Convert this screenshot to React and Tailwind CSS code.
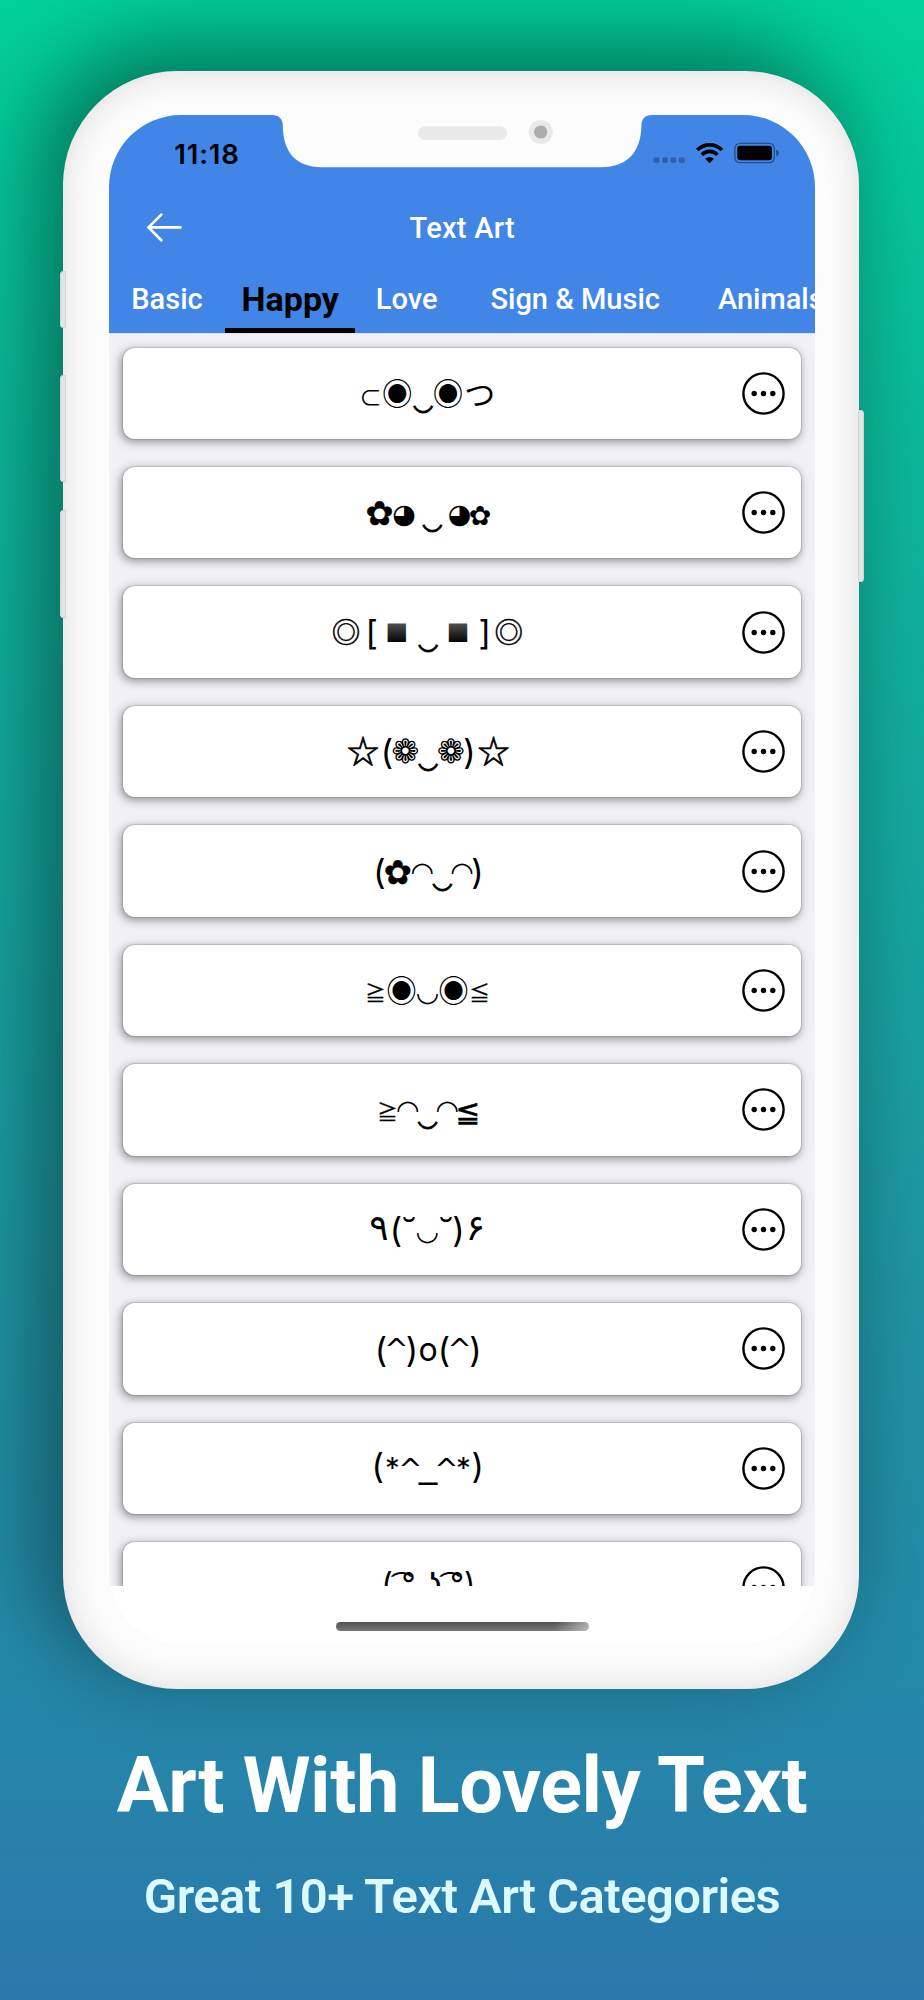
import React from 'react';

// every glyph style has its own font, size and the distance from its middle to the baseline
const glyphs = {
    text: { className: 'font-[Inter]', fontSize: 34, drop: 9.9 },
    letter: { className: 'font-[Inter]', fontSize: 32, drop: 8.7 },
    caret: { className: 'font-["DejaVu_Sans"]', fontSize: 29, drop: 17.2 },
    star: { className: 'font-[Inter]', fontSize: 29.5, drop: 16 },
    line: { className: 'font-["DejaVu_Sans"]', fontSize: 37, drop: -7.6 },
    eye: { className: 'font-["Noto_Sans_CJK_JP"]', fontSize: 30.5, drop: 11.2 },
    ring: { className: 'font-["Noto_Sans_CJK_JP"] stroke-black stroke-[0.5]', fontSize: 28.5, drop: 10.8 },
    cup: { className: 'font-["Noto_Sans_CJK_JP"]', fontSize: 22.5, drop: 8.2 },
    hand: { className: 'font-["Noto_Sans_CJK_JP"]', fontSize: 31, drop: 10.8 },
    smile: { className: 'font-["Noto_Sans"] stroke-black stroke-[0.8]', fontSize: 34, drop: -5.2 },
    flower: { className: 'font-["DejaVu_Sans"] stroke-black stroke-[0.5]', fontSize: 33.5, drop: 12 },
    smallFlower: { className: 'font-["DejaVu_Sans"]', fontSize: 27, drop: 9.5 },
    pie: { className: 'font-["DejaVu_Sans"]', fontSize: 27, drop: 7.3 },
    square: { className: 'font-["DejaVu_Sans"]', fontSize: 24, drop: 6.2, fill: 'url(#squareFill)' },
    outline: { className: 'font-["Noto_Sans_CJK_JP"] stroke-black stroke-[0.7]', fontSize: 32, drop: 11.8 },
    bloom: { className: 'font-["DejaVu_Sans"]', fontSize: 33.5, drop: 11.3 },
    arch: { className: 'font-["DejaVu_Sans"]', fontSize: 27, drop: 11.3 },
    bowl: { className: 'font-["DejaVu_Sans"]', fontSize: 27, drop: 2 },
    compare: { className: 'font-["Noto_Sans_CJK_JP"] stroke-black stroke-[0.3]', fontSize: 20.5, drop: 8 },
    compareBold: { className: 'font-["DejaVu_Sans"] stroke-black stroke-[0.5]', fontSize: 29.5, drop: 8 },
    digit: { className: 'font-["DejaVu_Sans"]', fontSize: 36, drop: 11.2 },
    breve: { className: 'font-["Noto_Sans"]', fontSize: 37, drop: 24.8 },
    lenny: { className: 'font-[Inter]', fontSize: 31, drop: 0 },
};

// [character, glyph style, middle x, middle y] inside of the card
const faces = [
    [['⊂', 'cup', 247.4, 49.7], ['◉', 'eye', 274.3, 45.7], ['‿', 'smile', 300, 62.5], ['◉', 'eye', 325, 45.7], ['つ', 'hand', 356.8, 46.7]],
    [['✿', 'flower', 256.6, 45.8], ['◕', 'pie', 281, 48.8], ['‿', 'smile', 309.3, 62.5], ['◕', 'pie', 336.5, 48.8], ['✿', 'smallFlower', 357, 48.5]],
    [['◎', 'ring', 223, 45.1], ['[', 'text', 248.6, 48.3], ['■', 'square', 273.8, 45.8], ['‿', 'smile', 305, 62.6], ['■', 'square', 335.2, 45.8], [']', 'text', 361.8, 48.3], ['◎', 'ring', 385.8, 45.1]],
    [['☆', 'outline', 240, 45.3], ['(', 'text', 264, 48.3], ['❁', 'bloom', 282.3, 45.8], ['‿', 'smile', 305, 62.6], ['❁', 'bloom', 327.8, 45.8], [')', 'text', 346.5, 48.3], ['☆', 'outline', 370.5, 45.3]],
    [['(', 'text', 256.5, 48.3], ['✿', 'flower', 274.8, 45.8], ['◠', 'arch', 299.3, 43.8], ['‿', 'smile', 319.3, 62.6], ['◠', 'arch', 339, 43.8], [')', 'text', 354.5, 48.3]],
    [['≧', 'compare', 252.5, 48], ['◉', 'eye', 278.5, 45.5], ['◡', 'bowl', 304.5, 53.8], ['◉', 'eye', 330.5, 45.5], ['≦', 'compare', 356.5, 48]],
    [['≧', 'compare', 264.5, 48], ['◠', 'arch', 284.7, 43.9], ['‿', 'smile', 304.6, 62.6], ['◠', 'arch', 324.3, 43.9], ['≦', 'compareBold', 344.8, 49.8]],
    [['۹', 'digit', 256, 44.4], ['(', 'text', 273, 48.3], ['˘', 'breve', 286, 35.2], ['◡', 'bowl', 304.3, 53.6], ['˘', 'breve', 323, 35.2], [')', 'text', 335.5, 48.3], ['۶', 'digit', 352.3, 45]],
    [['(', 'text', 258, 48.6], ['^', 'caret', 273.5, 39], [')', 'text', 289, 48.6], ['o', 'letter', 305, 49], ['(', 'text', 321, 48.6], ['^', 'caret', 336.7, 39], [')', 'text', 352.5, 48.6]],
    [['(', 'text', 254.8, 45.4], ['*', 'star', 269.5, 40], ['^', 'caret', 287.3, 38.8], ['_', 'line', 305, 60.8], ['^', 'caret', 323.3, 38.8], ['*', 'star', 340.5, 40], [')', 'text', 354.8, 45.4]],
    [['( ͡° ͜ʖ ͡°)', 'lenny', 305.5, 53]],
];

const Face = ({ parts }) => (
    <svg className="w-[619px] h-[91px] shrink-0" viewBox="0 0 619 91">
        <text textAnchor="middle">
            {parts.map(([char, style, x, y], idx) => {
                const { className, fontSize, drop, fill } = glyphs[style];
                return (
                    <tspan key={idx} x={x} y={y + drop} className={className} fontSize={fontSize} fill={fill || '#000'}>
                        {char}
                    </tspan>
                );
            })}
        </text>
    </svg>
);

const MoreButton = () => (
    <button className="shrink-0">
        <svg className="w-[43px] h-[43px]" viewBox="0 0 43 43">
            <circle cx="21.5" cy="21.5" r="20.1" fill="none" stroke="#000" strokeWidth="2.4" />
            <circle cx="12.2" cy="21.5" r="2.7" />
            <circle cx="21.5" cy="21.5" r="2.7" />
            <circle cx="30.8" cy="21.5" r="2.7" />
        </svg>
    </button>
);

const StatusIcons = () => (
    <svg className="w-[128px] h-[24px]" viewBox="0 0 128 24">
        <g fill="#000" opacity="0.25">
            <rect x="0.3" y="15.3" width="6" height="5.6" rx="1.6" />
            <rect x="9" y="15.3" width="6" height="5.6" rx="1.6" />
            <rect x="17.3" y="15.3" width="6" height="5.6" rx="1.6" />
            <rect x="25.8" y="15.3" width="6" height="5.6" rx="1.6" />
        </g>
        <g fill="none" stroke="#000" strokeWidth="3.6">
            <path d="M44.3 8 A17.5 17.5 0 0 1 69 8" />
            <path d="M48.8 12.7 A11 11 0 0 1 64.5 12.7" />
        </g>
        <path d="M56.6 21.2 L52.2 16.7 A6.4 6.4 0 0 1 61 16.7 Z" />
        <rect x="81.9" y="1.4" width="39.4" height="19.2" rx="5" fill="none" stroke="#000" strokeOpacity="0.4" strokeWidth="1.4" />
        <rect x="84.3" y="3.7" width="34.6" height="14.6" rx="2.8" />
        <path d="M123.3 7.8 C126.6 8.6 126.6 13.4 123.3 14.2 Z" fillOpacity="0.45" />
    </svg>
);

const Notch = () => (
    <svg className="absolute left-0 top-0 w-[706px] h-[54px]" viewBox="0 0 706 54">
        <path
            fill="#fcfcfc"
            d="M163 -1 V0 C170 0 173.6 4 173.8 10 C173.8 36 186 52.3 213 52.3 H492 C519 52.3 532.4 36 532.4 10 C532.6 4 536 0 543 0 V-1 Z"
        />
        <rect x="309" y="11.3" width="89" height="13.8" rx="6.9" fill="#e9e9e9" />
        <circle cx="431.7" cy="17" r="12" fill="#e9e9e9" />
        <circle cx="431.7" cy="17" r="6.6" fill="#adadad" />
    </svg>
);

const SideButton = ({ className }) => (
    <div className={`absolute w-[6px] border border-[#d2d2d2] bg-[#e4e4e4] ${className}`}></div>
);

const App = () => {
    return (
        <div className="w-[924px] h-[2000px] overflow-hidden bg-[linear-gradient(180deg,#02d19a_0%,#0bb99a_21%,#17a39f_48%,#2093a3_67%,#2489a9_83%,#2b79ab_100%)] font-[Roboto,sans-serif]">
            <div className="relative w-[795.7px] h-[1618px] mt-[71px] ml-[63.3px] pt-[44px] pl-[46px] rounded-[114px] bg-[#fcfcfc] shadow-[-20px_-24px_90px_rgba(0,0,0,0.45),inset_0_0_36px_rgba(0,0,0,0.13)]">
                <SideButton className="-left-[3.5px] top-[200px] h-[57px] rounded-l-[3px]" />
                <SideButton className="-left-[3.5px] top-[304px] h-[107px] rounded-l-[3px]" />
                <SideButton className="-left-[3.5px] top-[439px] h-[108px] rounded-l-[3px]" />
                <SideButton className="-right-[5px] top-[339px] h-[172px] rounded-r-[3px]" />

                <div className="relative flex flex-col w-[706px] h-[1529px] overflow-hidden rounded-[72px] bg-white">
                    <header className="h-[218px] shrink-0 flex flex-col bg-[#4186e7]">
                        <div className="h-[76px] flex justify-between pl-[65px] pr-[34.3px] pt-[27px]">
                            <span className="font-[Inter] font-semibold text-[27.5px] leading-[24px] tracking-[0.8px]">11:18</span>
                            <StatusIcons />
                        </div>
                        <div className="relative h-[72px] flex items-center justify-center pt-[2px]">
                            <svg className="absolute left-[37px] top-[21px] w-[38px] h-[30px]" viewBox="0 0 38 30" fill="none" stroke="#fff" strokeWidth="2.7" strokeLinecap="round" strokeLinejoin="round">
                                <path d="M34.5 15.4 H2.5 M15.3 2.6 L2.5 15.4 L15.3 28.2" />
                            </svg>
                            <h1 className="font-medium text-[29px] tracking-[0.3px] text-white leading-none">Text Art</h1>
                        </div>
                        <nav className="h-[70px] flex items-start whitespace-nowrap text-white font-medium text-[29px] leading-[34px] pt-[19px]">
                            <span className="w-[116px] shrink-0 pl-[22px]">Basic</span>
                            <span className="w-[130px] h-[51px] shrink-0 border-b-[5px] border-black text-black text-center font-bold text-[34px]">Happy</span>
                            <span className="ml-[20.5px]">Love</span>
                            <span className="ml-[53px]">Sign & Music</span>
                            <span className="ml-[58px]">Animals</span>
                        </nav>
                    </header>

                    <main className="h-[1253px] shrink-0 overflow-hidden bg-[#f1f0f6] border-t border-[#e2e2ea] flex flex-col gap-[28.07px] pl-[13.8px] pt-[13.5px]">
                        {faces.map((parts, idx) => (
                            <div key={idx} className="w-[678px] h-[91.4px] shrink-0 flex items-center rounded-[12px] bg-white shadow-[0_0_1px_0.5px_rgba(0,0,0,0.12),-1.5px_2.5px_10px_rgba(0,0,0,0.4)]">
                                <Face parts={parts} />
                                <MoreButton />
                            </div>
                        ))}
                    </main>

                    <div className="flex justify-center pt-[36px]">
                        <div className="w-[252.5px] h-[8.7px] rounded-full bg-[linear-gradient(100deg,transparent_86%,rgba(255,255,255,0.5)_100%),linear-gradient(#525252,#777777)]"></div>
                    </div>
                    <Notch />
                </div>
            </div>

            <div className="text-center">
                <h2 className="mt-[51px] font-bold text-[77.5px] leading-[92px] tracking-[-0.45px] text-white">Art With Lovely Text</h2>
                <p className="mt-[36px] font-semibold text-[49px] leading-[58px] tracking-[-0.55px] text-[#dafaff]">Great 10+ Text Art Categories</p>
            </div>

            <svg className="absolute w-0 h-0">
                <linearGradient id="squareFill" x1="0" y1="0" x2="0" y2="1">
                    <stop offset="0.3" stopColor="#555" />
                    <stop offset="0.75" stopColor="#000" />
                </linearGradient>
            </svg>
        </div>
    );
}

export default App;
